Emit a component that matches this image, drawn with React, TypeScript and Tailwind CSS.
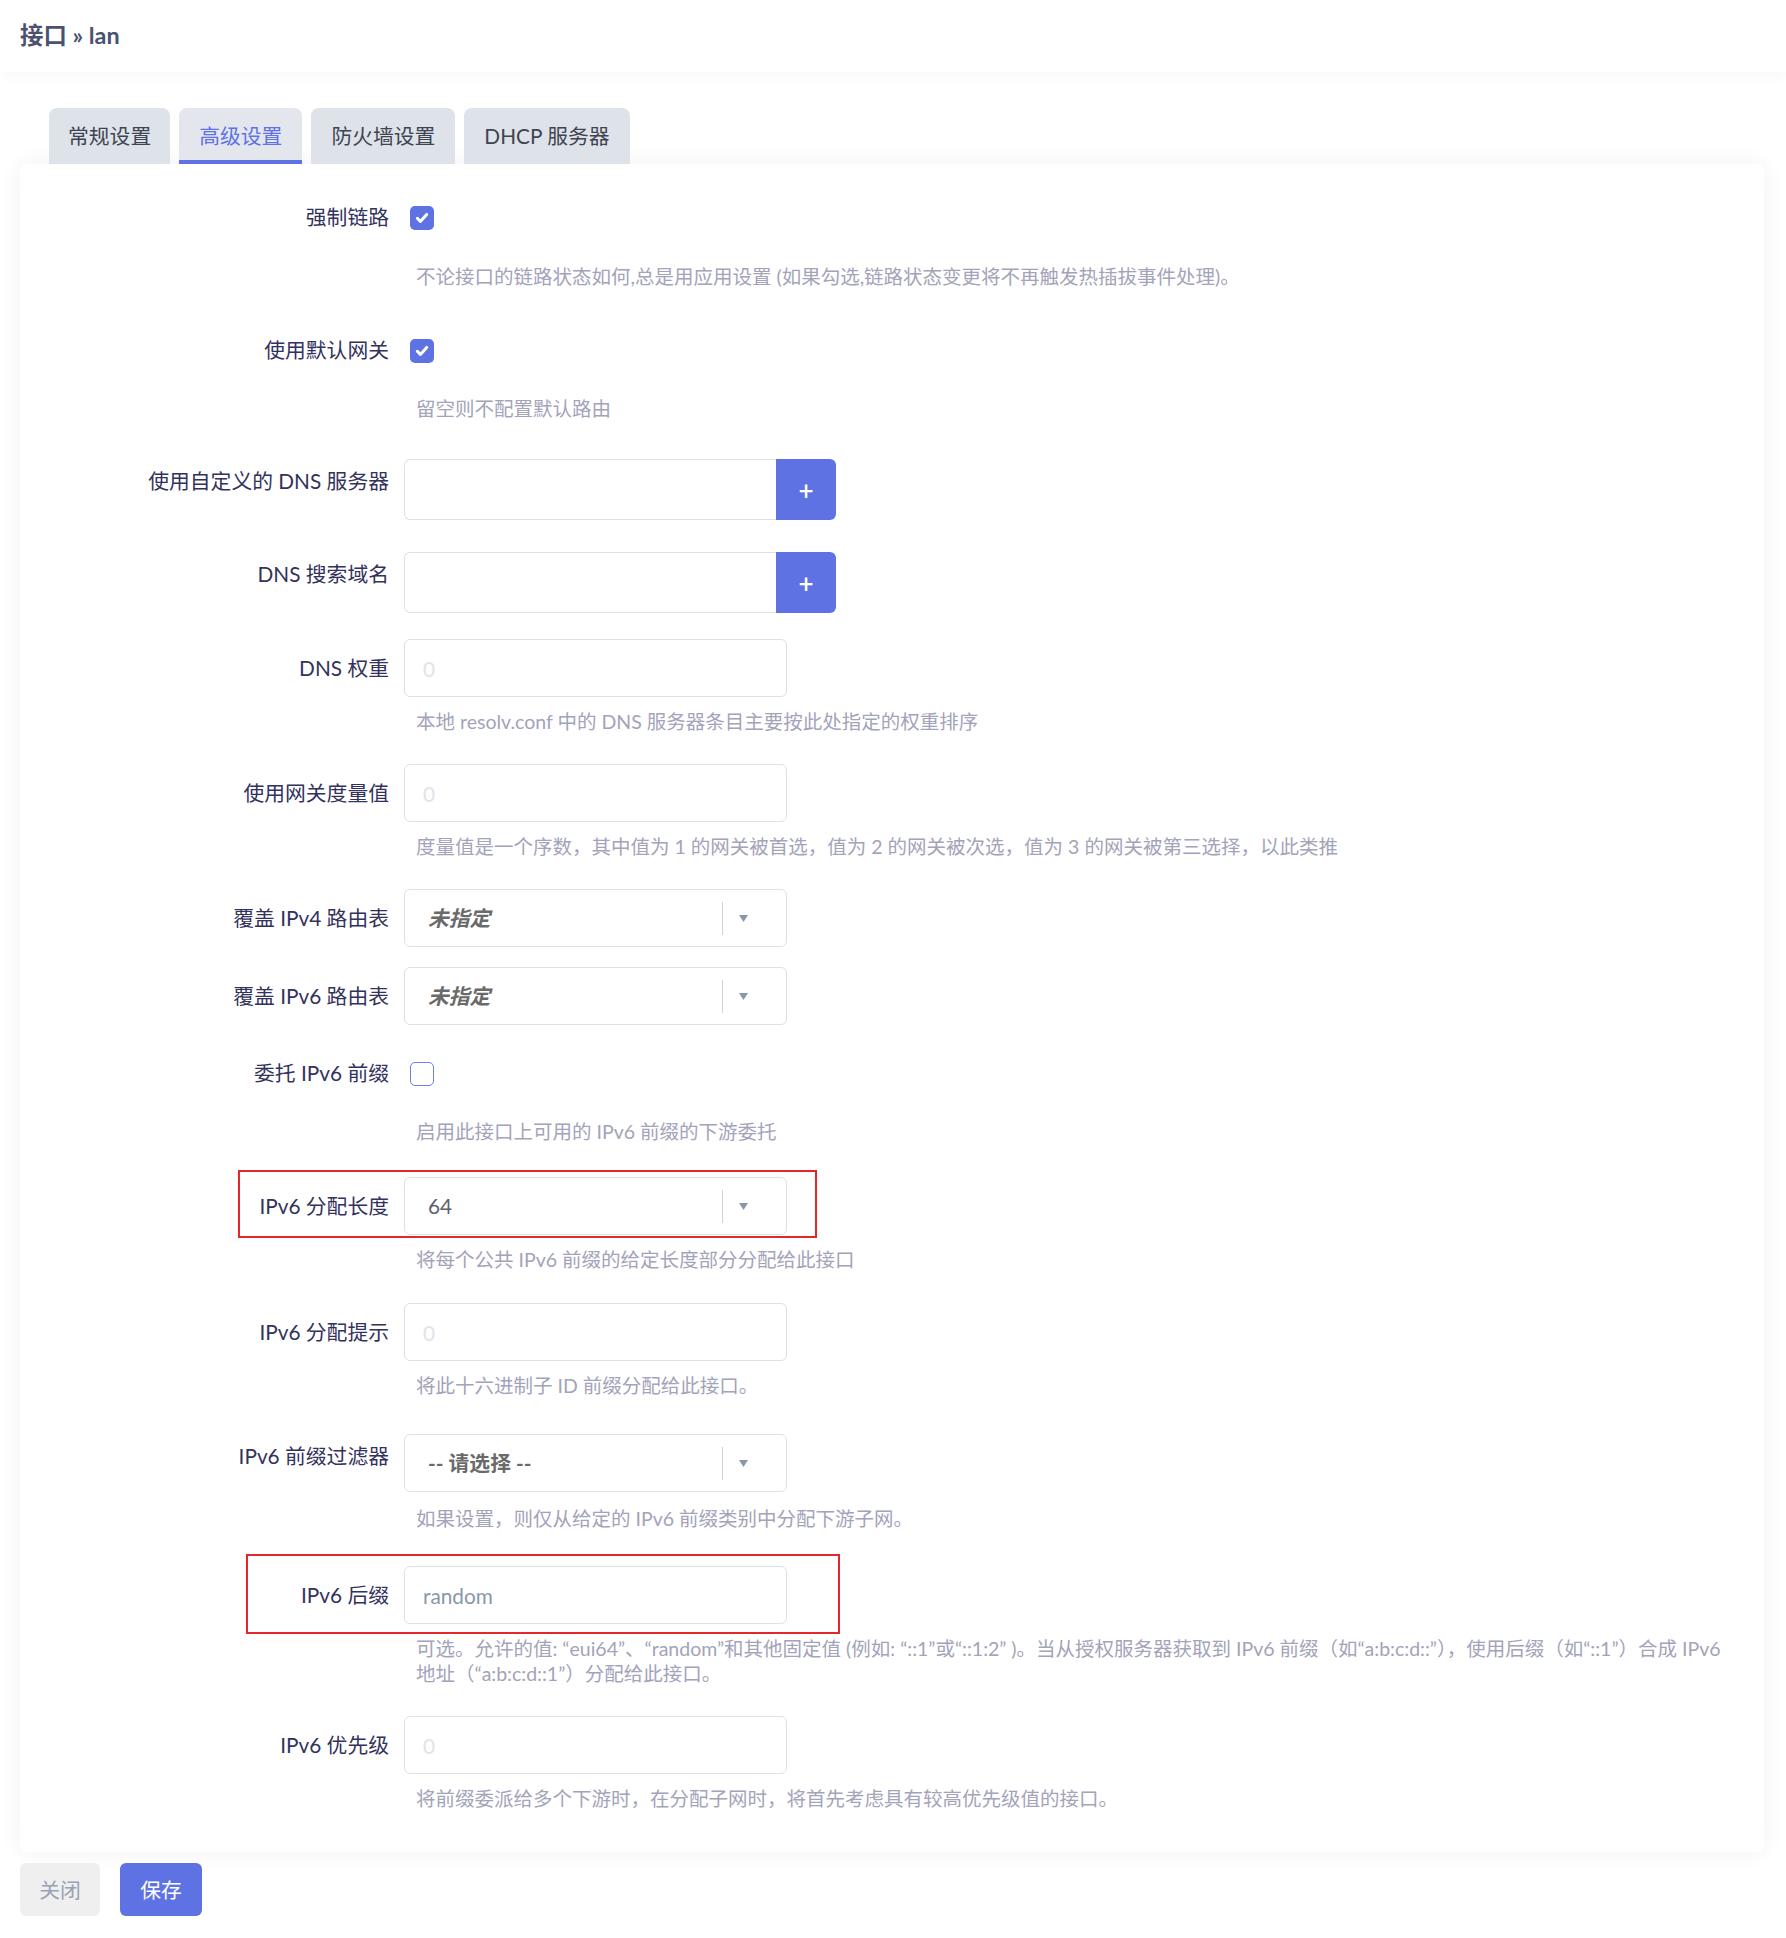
import React from "react";

const Check = () => (
  <svg width="16" height="16" viewBox="0 0 16 16" fill="none">
    <path d="M3.3 8.3l3.1 3.1 6.3-7" stroke="#ffffff" strokeWidth="3" strokeLinecap="round" strokeLinejoin="round" />
  </svg>
);

function Checkbox({ checked }: { checked: boolean }) {
  if (checked) {
    return (
      <div className="ml-[6px] flex h-[24px] w-[24px] items-center justify-center rounded-[5px] bg-[#5e72e4]">
        <Check />
      </div>
    );
  }
  return <div className="ml-[6px] h-[24px] w-[24px] rounded-[5px] border-[1.5px] border-[#6f80e6] bg-white" />;
}

function TextInput({ placeholder, value }: { placeholder?: string; value?: string }) {
  return (
    <input
      readOnly
      placeholder={placeholder}
      defaultValue={value}
      className="block h-[58px] w-[383px] rounded-[6px] border border-[#dfe1e8] bg-white px-[18px] text-[20.8px] text-[#8898aa] outline-none placeholder:text-[#dfe3ea]"
    />
  );
}

function ListInput() {
  return (
    <div className="flex h-[61px] w-[432px]">
      <input
        readOnly
        className="block h-full min-w-0 flex-1 rounded-l-[6px] border border-r-0 border-[#dfe1e8] bg-white px-[18px] text-[20.8px] outline-none"
      />
      <div className="flex h-full w-[60px] items-center justify-center rounded-r-[6px] bg-[#5e72e4] text-[26px] font-semibold leading-none text-white">
        +
      </div>
    </div>
  );
}

function Select({ children }: { children: React.ReactNode }) {
  return (
    <div className="flex h-[58px] w-[383px] items-center rounded-[6px] border border-[#dfe1e8] bg-white pl-[23px]">
      {children}
      <div className="ml-auto flex items-center pr-[38px]">
        <div className="h-[33px] w-px bg-[#cfd3da]" />
        <svg className="ml-[16px]" width="9" height="7" viewBox="0 0 9 7">
          <path d="M0 0h9L4.5 7z" fill="#8898aa" />
        </svg>
      </div>
    </div>
  );
}

function Row({
  label,
  rowCls,
  labelCls,
  desc,
  descCls,
  children,
  box,
}: {
  label: string;
  rowCls: string;
  labelCls: string;
  desc?: React.ReactNode;
  descCls?: string;
  children: React.ReactNode;
  box?: React.ReactNode;
}) {
  return (
    <div className={`relative flex ${rowCls}`}>
      <div className={`w-[369px] shrink-0 text-right text-[20.8px] text-[#32325d] ${labelCls}`}>{label}</div>
      <div className="ml-[15px] min-w-0 flex-1">
        {children}
        {desc ? (
          <div className={`ml-[12px] text-[19.5px] leading-[25px] text-[#a3a3ba] ${descCls ?? ""}`}>{desc}</div>
        ) : null}
      </div>
      {box}
    </div>
  );
}

export default function App() {
  return (
    <div className="min-h-[1938px] bg-white font-['Lato','Noto_Sans_CJK_SC',sans-serif]">
      <header className="relative z-10 flex h-[72px] items-center bg-white pl-[20px] shadow-[0_3px_14px_rgba(0,0,0,0.035)]">
        <h1 className="text-[23.4px] font-bold text-[#4b5270]">接口 » lan</h1>
      </header>

      <div className="flex gap-[9px] pl-[49px] pt-[36px]">
        <div className="flex h-[56px] items-center rounded-t-[8px] bg-[#dee3ea] px-[19px] text-[20.8px] text-[#3f4452]">常规设置</div>
        <div className="flex h-[56px] items-center rounded-t-[8px] border-b-4 border-[#5e72e4] bg-[#e3e7ed] px-[20px] pt-[4px] text-[20.8px] text-[#5e72e4]">高级设置</div>
        <div className="flex h-[56px] items-center rounded-t-[8px] bg-[#dee3ea] px-[20px] text-[20.8px] text-[#3f4452]">防火墙设置</div>
        <div className="flex h-[56px] items-center rounded-t-[8px] bg-[#dee3ea] px-[20px] text-[20.8px] text-[#3f4452]">DHCP 服务器</div>
      </div>

      <div className="ml-[20px] mr-[22px] rounded-[6px] bg-white pb-[41px] pr-[40px] pt-[42px] shadow-[0_0_24px_rgba(0,0,0,0.06)]">
        <Row
          label="强制链路"
          rowCls="mt-0"
          labelCls="leading-[22px]"
          desc="不论接口的链路状态如何,总是用应用设置 (如果勾选,链路状态变更将不再触发热插拔事件处理)。"
          descCls="mt-[34px]"
        >
          <Checkbox checked />
        </Row>

        <Row label="使用默认网关" rowCls="mt-[50px]" labelCls="leading-[22px]" desc="留空则不配置默认路由" descCls="mt-[33px]">
          <Checkbox checked />
        </Row>

        <Row label="使用自定义的 DNS 服务器" rowCls="mt-[38px]" labelCls="pt-[7px] leading-[30px]">
          <ListInput />
        </Row>

        <Row label="DNS 搜索域名" rowCls="mt-[32px]" labelCls="pt-[7px] leading-[30px]">
          <ListInput />
        </Row>

        <Row
          label="DNS 权重"
          rowCls="mt-[26px]"
          labelCls="pt-[14px] leading-[30px]"
          desc="本地 resolv.conf 中的 DNS 服务器条目主要按此处指定的权重排序"
          descCls="mt-[12px]"
        >
          <TextInput placeholder="0" />
        </Row>

        <Row
          label="使用网关度量值"
          rowCls="mt-[30px]"
          labelCls="pt-[14px] leading-[30px]"
          desc="度量值是一个序数，其中值为 1 的网关被首选，值为 2 的网关被次选，值为 3 的网关被第三选择，以此类推"
          descCls="mt-[12px]"
        >
          <TextInput placeholder="0" />
        </Row>

        <Row label="覆盖 IPv4 路由表" rowCls="mt-[30px]" labelCls="pt-[14px] leading-[30px]">
          <Select>
            <span className="text-[20.8px] font-bold italic text-[#6a6a6a]">未指定</span>
          </Select>
        </Row>

        <Row label="覆盖 IPv6 路由表" rowCls="mt-[20px]" labelCls="pt-[14px] leading-[30px]">
          <Select>
            <span className="text-[20.8px] font-bold italic text-[#6a6a6a]">未指定</span>
          </Select>
        </Row>

        <Row
          label="委托 IPv6 前缀"
          rowCls="mt-[37px]"
          labelCls="leading-[22px]"
          desc="启用此接口上可用的 IPv6 前缀的下游委托"
          descCls="mt-[33px]"
        >
          <Checkbox checked={false} />
        </Row>

        <Row
          label="IPv6 分配长度"
          rowCls="mt-[33px]"
          labelCls="pt-[14px] leading-[30px]"
          desc="将每个公共 IPv6 前缀的给定长度部分分配给此接口"
          descCls="mt-[12px]"
          box={<div className="pointer-events-none absolute left-[218px] top-[-7px] h-[68px] w-[579px] border-2 border-[#e5262b]" />}
        >
          <Select>
            <span className="text-[20.8px] text-[#5b6070]">64</span>
          </Select>
        </Row>

        <Row
          label="IPv6 分配提示"
          rowCls="mt-[31px]"
          labelCls="pt-[14px] leading-[30px]"
          desc="将此十六进制子 ID 前缀分配给此接口。"
          descCls="mt-[12px]"
        >
          <TextInput placeholder="0" />
        </Row>

        <Row
          label="IPv6 前缀过滤器"
          rowCls="mt-[36px]"
          labelCls="pt-[7px] leading-[30px]"
          desc="如果设置，则仅从给定的 IPv6 前缀类别中分配下游子网。"
          descCls="mt-[14px]"
        >
          <Select>
            <span className="text-[20.8px] font-bold text-[#6a6a6a]">-- 请选择 --</span>
          </Select>
        </Row>

        <Row
          label="IPv6 后缀"
          rowCls="mt-[35px]"
          labelCls="pt-[14px] leading-[30px]"
          desc={
            <>
              <span className="whitespace-nowrap">
                可选。允许的值: “eui64”、“random”和其他固定值 (例如: “::1”或“::1:2” )。当从授权服务器获取到 IPv6 前缀（如“a:b:c:d::”），使用后缀（如“::1”）合成 IPv6
              </span>
              <br />
              地址（“a:b:c:d::1”）分配给此接口。
            </>
          }
          descCls="mt-[12px]"
          box={<div className="pointer-events-none absolute left-[226px] top-[-12px] h-[80px] w-[594px] border-2 border-[#e5262b]" />}
        >
          <TextInput value="random" />
        </Row>

        <Row
          label="IPv6 优先级"
          rowCls="mt-[30px]"
          labelCls="pt-[14px] leading-[30px]"
          desc="将前缀委派给多个下游时，在分配子网时，将首先考虑具有较高优先级值的接口。"
          descCls="mt-[12px]"
        >
          <TextInput placeholder="0" />
        </Row>
      </div>

      <div className="ml-[20px] mt-[11px] flex gap-[20px] pb-[22px]">
        <div className="flex h-[53px] w-[80px] items-center justify-center rounded-[6px] bg-[#efefef] text-[20.8px] text-[#98a2b3]">关闭</div>
        <div className="flex h-[53px] w-[82px] items-center justify-center rounded-[6px] bg-[#5e72e4] text-[20.8px] text-white">保存</div>
      </div>
    </div>
  );
}
